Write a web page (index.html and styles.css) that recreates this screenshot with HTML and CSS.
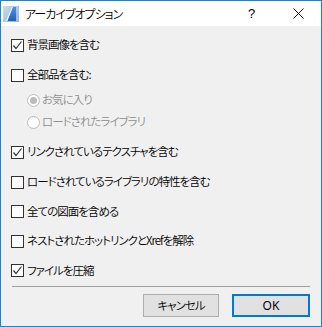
FILE: index.html
```html
<!DOCTYPE html>
<html lang="ja">
<head>
<meta charset="utf-8">
<link rel="stylesheet" href="styles.css">
</head>
<body>
<div class="window">
  <div class="titlebar">
    <svg class="app-icon" width="16" height="16" viewBox="0 0 16 16">
      <defs>
        <linearGradient id="bg" x1="0" y1="0" x2="1" y2="1">
          <stop offset="0" stop-color="#c9dcf4"/>
          <stop offset="1" stop-color="#8fb4e6"/>
        </linearGradient>
        <linearGradient id="sail" x1="0" y1="0" x2="0" y2="1">
          <stop offset="0" stop-color="#4f8fe0"/>
          <stop offset="1" stop-color="#1d5fc8"/>
        </linearGradient>
      </defs>
      <rect x="0" y="0" width="16" height="16" fill="url(#bg)"/>
      <polygon points="3,15 9,1 10,1 4.5,15" fill="#ffffff"/>
      <polygon points="4.5,15 10,1 13,1 13,15" fill="url(#sail)"/>
    </svg>
    <span class="title">アーカイブオプション</span>
    <span class="help">?</span>
    <svg class="close" width="11" height="11" viewBox="0 0 11 11">
      <path d="M0.5 0.5 L10.5 10.5 M10.5 0.5 L0.5 10.5" stroke="#111" stroke-width="1" fill="none"/>
    </svg>
  </div>
  <div class="content">
    <div class="row">
      <span class="check"><svg width="11" height="11" viewBox="0 0 11 11"><path d="M1.5 5.5 L4 8.5 L9.5 1.5" stroke="#333" stroke-width="1.2" fill="none"/></svg></span>
      <span class="label">背景画像を含む</span>
    </div>
    <div class="row">
      <span class="check"></span>
      <span class="label">全部品を含む:</span>
    </div>
    <div class="radios">
      <div class="radio-row">
        <span class="radio selected"></span>
        <span class="label disabled">お気に入り</span>
      </div>
      <div class="radio-row">
        <span class="radio"></span>
        <span class="label disabled">ロードされたライブラリ</span>
      </div>
    </div>
    <div class="row">
      <span class="check"><svg width="11" height="11" viewBox="0 0 11 11"><path d="M1.5 5.5 L4 8.5 L9.5 1.5" stroke="#333" stroke-width="1.2" fill="none"/></svg></span>
      <span class="label">リンクされているテクスチャを含む</span>
    </div>
    <div class="row">
      <span class="check"></span>
      <span class="label">ロードされているライブラリの特性を含む</span>
    </div>
    <div class="row short">
      <span class="check"></span>
      <span class="label">全ての図面を含める</span>
    </div>
    <div class="row">
      <span class="check"></span>
      <span class="label">ネストされたホットリンクとXrefを解除</span>
    </div>
    <div class="row short">
      <span class="check"><svg width="11" height="11" viewBox="0 0 11 11"><path d="M1.5 5.5 L4 8.5 L9.5 1.5" stroke="#333" stroke-width="1.2" fill="none"/></svg></span>
      <span class="label">ファイルを圧縮</span>
    </div>
    <div class="separator"></div>
    <div class="buttons">
      <button class="btn">キャンセル</button>
      <button class="btn default">OK</button>
    </div>
  </div>
</div>
</body>
</html>
```
FILE: styles.css
```css
* { box-sizing: border-box; }
html, body {
  margin: 0;
  padding: 0;
  background: #f0f0f0;
}
body {
  font-family: "Noto Sans CJK JP", "Noto Sans", sans-serif;
  font-size: 11.5px;
  font-weight: 350;
  font-feature-settings: "palt";
  letter-spacing: -1px;
  color: #000;
}
.window {
  width: 322px;
  height: 327px;
  border: 1px solid #1883d7;
  background: #f0f0f0;
  display: flex;
  flex-direction: column;
}
.titlebar {
  height: 25px;
  background: #ffffff;
  display: flex;
  align-items: center;
  padding-left: 2px;
  flex-shrink: 0;
}
.app-icon {
  flex-shrink: 0;
  margin-top: 1px;
}
.title {
  margin-left: 6px;
  flex: 1;
  line-height: 1;
  font-size: 12px;
}
.help {
  font-family: "Liberation Sans", sans-serif;
  font-size: 13px;
  font-weight: 400;
  letter-spacing: 0;
  width: 10px;
  margin-right: 35px;
}
.close {
  margin-right: 17px;
}
.content {
  padding: 4px 10px 0 10px;
  display: flex;
  flex-direction: column;
}
.row {
  height: 30px;
  display: flex;
  align-items: center;
  gap: 3px;
}
.row.short {
  height: 29px;
}
.check {
  width: 13px;
  height: 13px;
  border: 1px solid #333;
  background: #fff;
  display: flex;
  align-items: center;
  justify-content: center;
  flex-shrink: 0;
}
.label {
  line-height: 1;
  white-space: nowrap;
}
.label.disabled {
  color: #8e8e8e;
}
.radios {
  display: flex;
  flex-direction: column;
  margin-top: -1px;
  margin-bottom: 4px;
  padding-left: 16px;
}
.radio-row {
  height: 22px;
  display: flex;
  align-items: center;
  gap: 2px;
}
.radio {
  width: 13px;
  height: 13px;
  border: 1px solid #bcbcbc;
  border-radius: 50%;
  background: #fff;
  display: flex;
  align-items: center;
  justify-content: center;
  flex-shrink: 0;
}
.radio.selected::after {
  content: "";
  width: 7px;
  height: 7px;
  border-radius: 50%;
  background: #bcbcbc;
}
.separator {
  height: 1px;
  background: #a0a0a0;
  margin: 1px 1px 0 1px;
}
.buttons {
  display: flex;
  justify-content: flex-end;
  gap: 13px;
  margin-top: 7px;
  padding-right: 1px;
}
.btn {
  height: 23px;
  width: 76px;
  border: 1px solid #adadad;
  background: #e1e1e1;
  font-family: "Noto Sans CJK JP", "Noto Sans", sans-serif;
  font-feature-settings: "palt";
  font-weight: 350;
  letter-spacing: -1px;
  font-size: 11.5px;
  color: #000;
  padding: 0;
  line-height: 1;
}
.btn.default {
  width: 78px;
  border: 2px solid #0078d7;
  font-family: "Noto Sans", sans-serif;
  font-weight: 400;
  letter-spacing: 0;
  font-size: 12px;
}
```
